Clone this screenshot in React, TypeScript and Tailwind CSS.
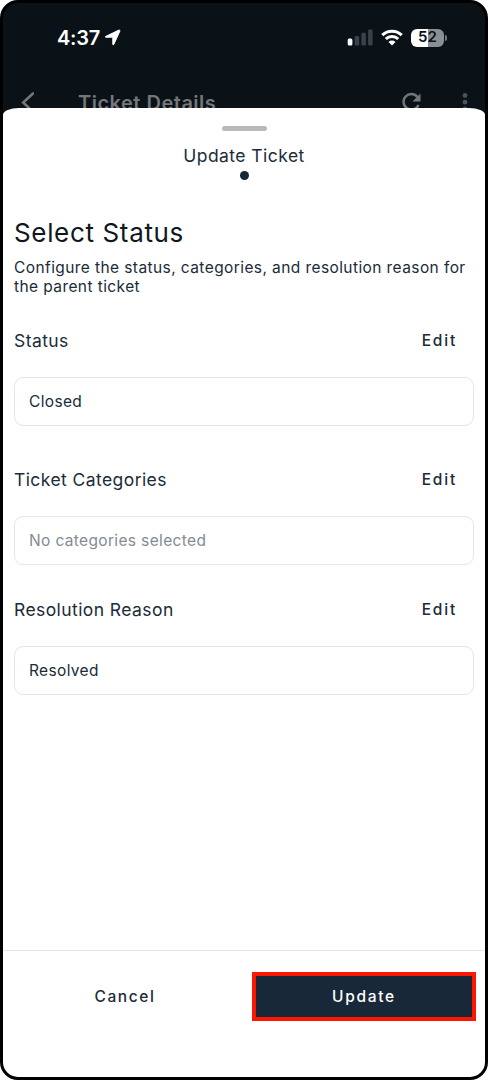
import clsx from "clsx";

interface FieldProps {
    label: string;
    value: string;
    muted?: boolean;
    className?: string;
}

function Field({ label, value, muted, className }: FieldProps) {
    return (
        <div className={className}>
            <div className="flex h-6 items-center justify-between pr-[17px]">
                <h2 className="text-[17.5px] tracking-[0.42px] text-[#202b38]">{label}</h2>
                <button className="text-[15.5px] font-medium tracking-[1.8px] text-[#202b38]">Edit</button>
            </div>
            <div
                className={clsx(
                    "mt-6 flex h-[49px] items-center rounded-[9px] border-[1.5px] border-[#e4e6ec] px-3.5 text-[15.5px] tracking-[0.35px]",
                    muted ? "text-[#838b93]" : "text-[#202b38]"
                )}
            >
                {value}
            </div>
        </div>
    );
}

function StatusBar() {
    return (
        <div className="flex h-[68px] items-center justify-between pl-[54px] pr-[38px] pt-px text-white">
            <div className="flex items-center gap-1">
                <span className="text-[20px] font-semibold tracking-[-0.2px]">4:37</span>
                <svg width="17" height="17" viewBox="0 0 17 17" fill="currentColor" stroke="currentColor" strokeWidth="1" strokeLinejoin="round">
                    <path d="M1.5 7.6 14.8 1.1Q16.3.7 15.8 2.2L9.8 15.4Q9 16.6 8.8 15.2V8.7Q8.8 8.2 8.2 8.2H1.9Q.8 8.1 1.5 7.6Z" />
                </svg>
            </div>
            <div className="flex items-center">
                <svg width="26" height="17" viewBox="0 0 26 17">
                    <rect x="0.7" y="9.5" width="4.7" height="7" rx="1.5" fill="#fff" />
                    <rect x="7.7" y="7" width="4.5" height="9.5" rx="1.3" fill="#3b4149" />
                    <rect x="14.4" y="3.8" width="4.5" height="12.7" rx="1.3" fill="#3b4149" />
                    <rect x="21.1" y="0.5" width="4.5" height="16" rx="1.3" fill="#3b4149" />
                </svg>
                <svg className="ml-2" width="22" height="17" viewBox="0 0 22 17" fill="none" stroke="#fff" strokeWidth="3.1">
                    <path d="M1.3 6.2a14 14 0 0 1 19.4 0" />
                    <path d="M4.8 10a8.8 8.8 0 0 1 12.4 0" />
                    <path d="m11 16.4-3.5-3.4a5 5 0 0 1 7 0Z" fill="#fff" stroke="none" />
                </svg>
                <div className="ml-2 flex h-[18px] w-[33px] items-center justify-center rounded-[6px] bg-linear-to-r from-white from-52% to-[#8b8e92] to-52% text-[15px] font-semibold text-[#0a1218]">
                    52
                </div>
                <span className="ml-px h-[6px] w-[2px] rounded-r-full bg-[#777b7f]" />
            </div>
        </div>
    );
}

export default function App() {
    return (
        <div className="h-[1080px] w-[488px] bg-white">
            <div className="flex h-full flex-col overflow-hidden rounded-[18px] border-[3px] border-black bg-[#0a1218] font-['Inter',sans-serif]">
                <header className="h-[105px] shrink-0">
                    <StatusBar />
                    <div className="flex h-[62px] items-center pl-[17px] pr-[17px] text-[#74777a]">
                        <svg width="14" height="22" viewBox="0 0 14 22" fill="none" stroke="currentColor" strokeWidth="2.6" strokeLinecap="round">
                            <path d="M13 2.5 3.2 11.5l9 8.5" />
                        </svg>
                        <h1 className="ml-11 flex-1 pt-px text-[20px] font-semibold tracking-[0.5px]">Ticket Details</h1>
                        <svg width="21" height="20" viewBox="0 0 21 20" fill="none" stroke="currentColor" strokeWidth="2.4">
                            <path d="M16.5 5A7.8 7.8 0 1 0 17.5 13" />
                            <path d="M19.5 1.5v8h-8Z" fill="currentColor" stroke="none" />
                        </svg>
                        <svg className="ml-10" width="6" height="20" viewBox="0 0 6 20" fill="#4c5259">
                            <circle cx="3" cy="3.5" r="2.4" />
                            <circle cx="3" cy="10.2" r="2.4" />
                            <circle cx="3" cy="16.9" r="2.4" />
                        </svg>
                    </div>
                </header>

                <main className="relative flex flex-1 flex-col rounded-t-[16px_7px] bg-white text-[#202b38]">
                    <div className="flex flex-col items-center pt-[18px]">
                        <div className="h-[5px] w-[45px] rounded-full bg-[#b9b9b9]" />
                        <p className="mt-[13px] text-[17.5px] leading-6 tracking-[0.45px]">Update Ticket</p>
                        <span className="mt-[3px] size-[9px] rounded-full bg-[#192636]" />
                    </div>

                    <div className="flex-1 px-[11px] pt-[35px]">
                        <h2 className="text-[26px] leading-9 tracking-[0.65px] text-[#10171f]">Select Status</h2>
                        <p className="mt-[7px] text-[15.5px] leading-[19px] tracking-[0.41px]">
                            Configure the status, categories, and resolution reason for the parent ticket
                        </p>
                        <Field label="Status" value="Closed" className="mt-[33px]" />
                        <Field label="Ticket Categories" value="No categories selected" muted className="mt-[42px]" />
                        <Field label="Resolution Reason" value="Resolved" className="mt-[33px]" />
                    </div>

                    <footer className="flex h-[127px] items-start border-t-[1.5px] border-[#e5e6ec] pl-[10px] pr-[9px] pt-[21px]">
                        <button className="h-[49px] w-[224px] text-[15.5px] font-medium tracking-[1.6px]">Cancel</button>
                        <button className="ml-[15px] h-[49px] w-[224px] border-4 border-[#fc1703] bg-[#192838] text-[15.5px] font-medium tracking-[1.7px] text-white">
                            Update
                        </button>
                    </footer>
                </main>
            </div>
        </div>
    );
}
